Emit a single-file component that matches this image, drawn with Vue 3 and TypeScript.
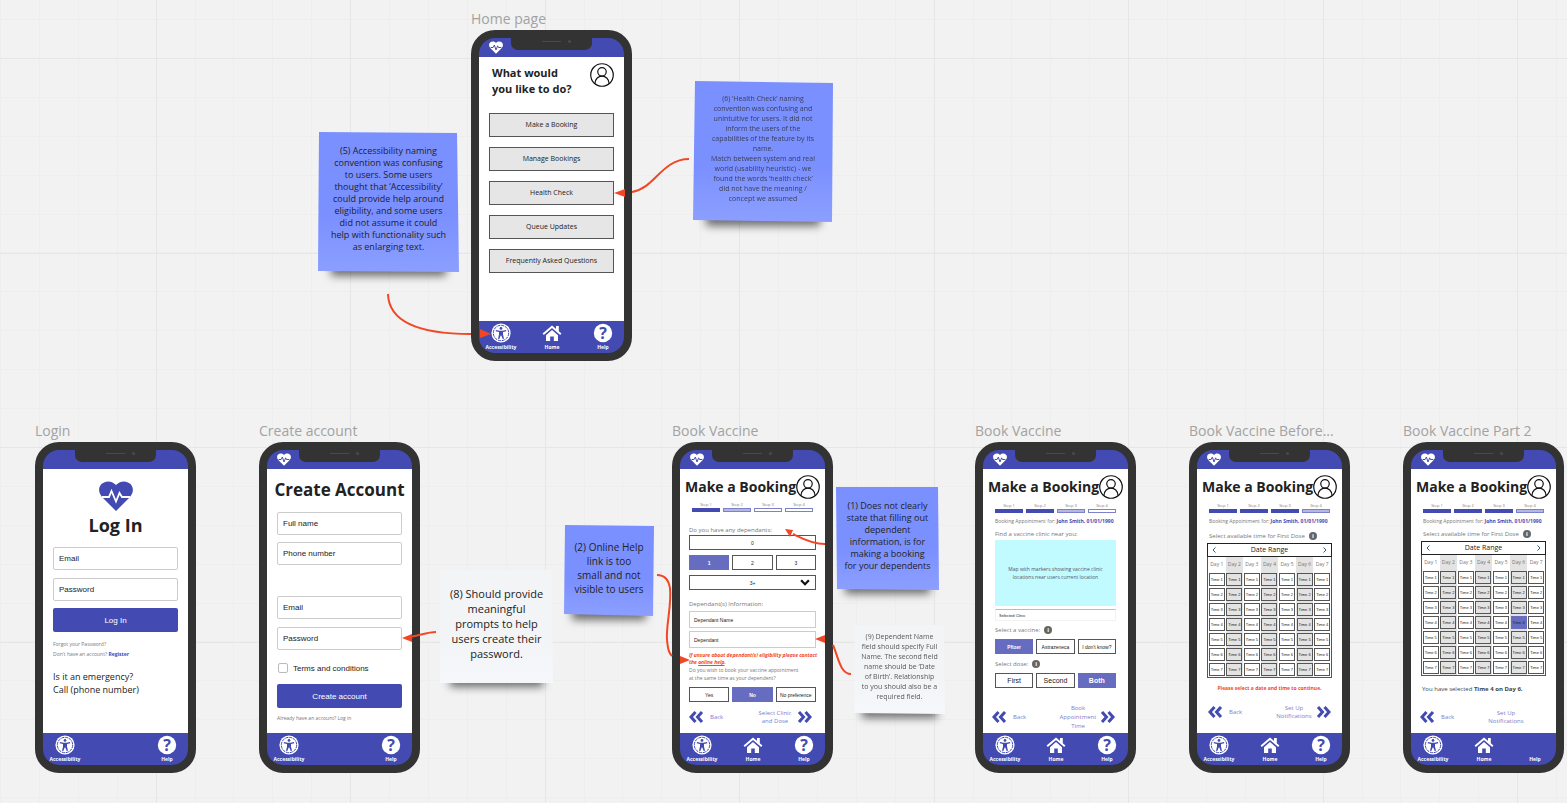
<script setup lang="ts">
type Kind = 'home' | 'login' | 'create' | 'dependants' | 'clinic' | 'time' | 'confirm'

interface Phone {
  id: string
  kind: Kind
  title: string
  x: number
  y: number
  steps?: number
}

interface Note {
  id: number
  tone: 'blue' | 'white'
  size: string
  x: number
  y: number
  w: number
  h: number
  shape: string
  text: string
}

const phones: Phone[] = [
  { id: 'home', kind: 'home', title: 'Home page', x: 471, y: 30 },
  { id: 'login', kind: 'login', title: 'Login', x: 35, y: 442 },
  { id: 'create', kind: 'create', title: 'Create account', x: 259, y: 442 },
  { id: 'book1', kind: 'dependants', title: 'Book Vaccine', x: 672, y: 442, steps: 1 },
  { id: 'book2', kind: 'clinic', title: 'Book Vaccine', x: 975, y: 442, steps: 2 },
  { id: 'book3', kind: 'time', title: 'Book Vaccine Before...', x: 1189, y: 442, steps: 3 },
  { id: 'book4', kind: 'confirm', title: 'Book Vaccine Part 2', x: 1403, y: 442, steps: 3 },
]

const notes: Note[] = [
  {
    id: 5, tone: 'blue', size: 'n9', x: 318, y: 132, w: 141, h: 140,
    shape: '1,0 139,1 141,140 0,139',
    text: '(5) Accessibility naming\nconvention was confusing\nto users. Some users\nthought that ‘Accessibility’\ncould provide help around\neligibility, and some users\ndid not assume it could\nhelp with functionality such\nas enlarging text.',
  },
  {
    id: 6, tone: 'blue', size: 'n7 faint', x: 693, y: 81, w: 140, h: 141,
    shape: '2,0 140,2 139,141 0,139',
    text: '(6) ‘Health Check’ naming\nconvention was confusing and\nunintuitive for users. It did not\ninform the users of the\ncapabilities of the feature by its\nname.\nMatch between system and real\nworld (usability heuristic) - we\nfound the words ‘health check’\ndid not have the meaning /\nconcept we assumed',
  },
  {
    id: 8, tone: 'white', size: 'n11', x: 440, y: 570, w: 113, h: 113,
    shape: '0,0 112,0 113,113 0,113',
    text: '(8) Should provide\nmeaningful\nprompts to help\nusers create their\npassword.',
  },
  {
    id: 2, tone: 'blue', size: 'n10', x: 564, y: 525, w: 90, h: 91,
    shape: '1,0 90,1 89,91 0,89',
    text: '(2) Online Help\nlink is too\nsmall and not\nvisible to users',
  },
  {
    id: 1, tone: 'blue', size: 'n9', x: 836, y: 487, w: 103, h: 103,
    shape: '0,0 102,0 103,103 1,102',
    text: '(1) Does not clearly\nstate that filling out\ndependent\ninformation, is for\nmaking a booking\nfor your dependents',
  },
  {
    id: 9, tone: 'white', size: 'n7 faint', x: 854, y: 625, w: 91, h: 89,
    shape: '1,0 90,0 91,89 0,88',
    text: '(9) Dependent Name\nfield should specify Full\nName. The second field\nname should be ‘Date\nof Birth’. Relationship\nto you should also be a\nrequired field.',
  },
]

const wires: string[] = [
  'M388 294 C389 325 425 334 471 334',
  'M689 159 C662 159 654 189 632 192',
  'M436 632 C428 632 421 635 410 637',
  'M657 575 C681 575 665 620 667 640 C668 650 669 653 672 656',
  'M825 544 C812 544 801 538 793 534',
  'M833 645 C838 656 840 674 851 674',
]

const heads: string[] = [
  '491,334 480,329 480,338',
  '614,193 625,189 625,197',
  '402,638 412,634 412,642',
  '690,660 680,656 680,664',
  '785,529 793,530 790,537',
  '815,639 825,635 825,643',
]

const homeActions = ['Make a Booking', 'Manage Bookings', 'Health Check', 'Queue Updates', 'Frequently Asked Questions']
const days = [1, 2, 3, 4, 5, 6, 7]
const major = Array.from({ length: 20 }, (_, i) => Math.round(-39 + i * 194.5))
const minor = Array.from({ length: 100 }, (_, i) => Math.round(i * 38.9))

const isBooking = (p: Phone) => p.steps !== undefined
const stepClass = (p: Phone, n: number) => {
  const done = p.steps ?? 0
  return n <= done ? 'done' : n === done + 1 ? 'next' : ''
}
const place = (x: number, y: number) => ({ left: `${x}px`, top: `${y}px` })
const box = (n: Note) => ({ ...place(n.x, n.y), width: `${n.w}px`, height: `${n.h}px` })
</script>

<template>
  <main class="board">
    <svg class="layer" aria-hidden="true">
      <g class="minor">
        <line v-for="v in minor" :key="'a' + v" :x1="v" :x2="v" y1="0" y2="100%" />
        <line v-for="v in minor" :key="'b' + v" :y1="v + 19" :y2="v + 19" x1="0" x2="100%" />
      </g>
      <g class="major">
        <line v-for="v in major" :key="'c' + v" :x1="v" :x2="v" y1="0" y2="100%" />
        <line v-for="v in major" :key="'d' + v" :y1="v + 97" :y2="v + 97" x1="0" x2="100%" />
      </g>
    </svg>

    <section v-for="p in phones" :key="p.id" class="device" :class="p.kind" :style="place(p.x, p.y)">
      <h2 class="caption">{{ p.title }}</h2>
      <div class="phone">
        <header class="status">
          <svg v-if="p.kind !== 'login'" class="logo" viewBox="0 0 34 30" aria-hidden="true">
            <path fill="#fff" d="M17 30 L3 16 C-6 5 8 -5 17 4 C26 -5 40 5 31 16 Z" />
            <path fill="none" stroke="#434bb3" stroke-width="2.4" d="M4 15 H10 L13 9 L17 21 L21 11 L23 15 H30" />
          </svg>
          <span class="notch"><i class="speaker"></i><i class="camera"></i></span>
        </header>

        <div class="screen">
          <template v-if="p.kind === 'home'">
            <div class="hello">
              <h3>What would<br />you like to do?</h3>
              <svg class="avatar" viewBox="0 0 26 26" role="img" aria-label="Profile">
                <g fill="none" stroke="#111" stroke-width="1.3">
                  <circle cx="13" cy="13" r="12.2" />
                  <circle cx="13" cy="9.6" r="4.6" />
                  <path d="M5.4 22.3 C5.6 11.6 20.4 11.6 20.6 22.3" />
                </g>
              </svg>
            </div>
            <div class="menu">
              <button v-for="a in homeActions" :key="a" type="button">{{ a }}</button>
            </div>
          </template>

          <form v-else-if="p.kind === 'login'" class="form" @submit.prevent>
            <svg class="heart" viewBox="0 0 34 30" aria-hidden="true">
              <path fill="#434bb3" d="M17 30 L3 16 C-6 5 8 -5 17 4 C26 -5 40 5 31 16 Z" />
              <path fill="none" stroke="#fff" stroke-width="1.8" d="M3 16 H10 L12.500 10 L17 20.500 L20.500 12 L23 16 H31" />
            </svg>
            <h3 class="login-title">Log In</h3>
            <input class="field" type="email" placeholder="Email" aria-label="Email" />
            <input class="field pw" type="password" placeholder="Password" aria-label="Password" />
            <button class="primary" type="submit">Log In</button>
            <p class="hint">Forgot your Password?<br />Don't have an account? <a href="#register">Register</a></p>
            <p class="emergency">Is it an emergency?<br />Call (phone number)</p>
          </form>

          <form v-else-if="p.kind === 'create'" class="form" @submit.prevent>
            <h3 class="create-title">Create Account</h3>
            <input class="field" type="text" placeholder="Full name" aria-label="Full name" />
            <input class="field" type="tel" placeholder="Phone number" aria-label="Phone number" />
            <input class="field apart" type="email" placeholder="Email" aria-label="Email" />
            <input class="field pw" type="password" placeholder="Password" aria-label="Password" />
            <label class="terms"><input type="checkbox" /> Terms and conditions</label>
            <button class="primary" type="submit">Create account</button>
            <p class="hint">Already have an account? Log in</p>
          </form>

          <template v-if="isBooking(p)">
            <div class="title-row">
              <h3>Make a Booking</h3>
              <svg class="avatar" viewBox="0 0 26 26" role="img" aria-label="Profile">
                <g fill="none" stroke="#111" stroke-width="1.3">
                  <circle cx="13" cy="13" r="12.2" />
                  <circle cx="13" cy="9.6" r="4.6" />
                  <path d="M5.4 22.3 C5.6 11.6 20.4 11.6 20.6 22.3" />
                </g>
              </svg>
            </div>
            <ol class="steps">
              <li v-for="n in 4" :key="n" :class="stepClass(p, n)">Step {{ n }}</li>
            </ol>
            <p v-if="p.kind !== 'dependants'" class="who">Booking Appointment for: <b>John Smith, 01/01/1990</b></p>
          </template>

          <form v-if="p.kind === 'dependants'" class="dependants-form" @submit.prevent>
            <p class="label">Do you have any dependants:</p>
            <button class="choice" type="button">0</button>
            <div class="row">
              <button class="choice on" type="button">1</button>
              <button class="choice" type="button">2</button>
              <button class="choice" type="button">3</button>
            </div>
            <div class="picker">
              <select class="choice" aria-label="More dependants"><option>3+</option></select>
              <svg viewBox="0 0 9 6" aria-hidden="true"><path d="M1 1 L4.500 4.500 L8 1" fill="none" stroke="#111" stroke-width="2" /></svg>
            </div>
            <p class="label info-label">Dependant(s) Information:</p>
            <input class="line" type="text" placeholder="Dependant Name" aria-label="Dependant Name" />
            <input class="line" type="text" placeholder="Dependant" aria-label="Dependant" />
            <p class="warn">If unsure about dependant(s) eligibility please contact<br />the <a href="#help">online help</a>.</p>
            <p class="ask">Do you wish to book your vaccine appointment<br />at the same time as your dependent?</p>
            <div class="row">
              <button class="choice" type="button">Yes</button>
              <button class="choice on" type="button">No</button>
              <button class="choice" type="button">No preference</button>
            </div>
          </form>

          <form v-else-if="p.kind === 'clinic'" class="clinic-form" @submit.prevent>
            <p class="label">Find a vaccine clinic near you:</p>
            <div class="map">Map with markers showing vaccine clinic<br />locations near users current location</div>
            <input class="selected" type="text" placeholder="Selected Clinic" aria-label="Selected Clinic" />
            <p class="label">Select a vaccine: <span class="info">i</span></p>
            <div class="row">
              <button class="choice on" type="button">Pfizer</button>
              <button class="choice" type="button">Astrazeneca</button>
              <button class="choice" type="button">I don't know?</button>
            </div>
            <p class="label">Select dose: <span class="info">i</span></p>
            <div class="row dose">
              <button class="choice" type="button">First</button>
              <button class="choice" type="button">Second</button>
              <button class="choice on" type="button">Both</button>
            </div>
          </form>

          <div v-else-if="p.kind === 'time' || p.kind === 'confirm'" class="schedule">
            <p class="label">Select available time for First Dose <span class="info">i</span></p>
            <div class="calendar">
              <div class="range">
                <button type="button" aria-label="Previous dates">
                  <svg viewBox="0 0 4 6"><path d="M3.500 0.500 L1 3 L3.500 5.500" /></svg>
                </button>
                <span>Date Range</span>
                <button type="button" aria-label="Next dates">
                  <svg viewBox="0 0 4 6"><path d="M0.500 0.500 L3 3 L0.500 5.500" /></svg>
                </button>
              </div>
              <table>
                <thead>
                  <tr><th v-for="d in days" :key="d" scope="col">Day {{ d }}</th></tr>
                </thead>
                <tbody>
                  <tr v-for="t in days" :key="t">
                    <td v-for="d in days" :key="d">
                      <button type="button" :class="{ on: p.kind === 'confirm' && t === 4 && d === 6 }">Time {{ t }}</button>
                    </td>
                  </tr>
                </tbody>
              </table>
            </div>
            <p v-if="p.kind === 'time'" class="must">Please select a date and time to continue.</p>
            <p v-else class="chosen">You have selected <b>Time 4 on Day 6.</b></p>
          </div>

          <nav v-if="isBooking(p)" class="pager" aria-label="Booking steps">
            <a class="back" href="#back">
              <svg class="chev" viewBox="0 0 15 12" aria-hidden="true"><path d="M6.500 1 L2 6 L6.500 11 M13 1 L8.500 6 L13 11" /></svg>
              <span>Back</span>
            </a>
            <a class="forward" href="#next">
              <span v-if="p.kind === 'dependants'">Select Clinic<br />and Dose</span>
              <span v-else-if="p.kind === 'clinic'">Book<br />Appointment<br />Time</span>
              <span v-else>Set Up<br />Notifications</span>
              <svg class="chev" :class="{ blank: p.kind === 'confirm' }" viewBox="0 0 15 12" aria-hidden="true"><path d="M2 1 L6.500 6 L2 11 M8.500 1 L13 6 L8.500 11" /></svg>
            </a>
          </nav>
        </div>

        <footer class="tabs">
          <a href="#accessibility">
            <svg viewBox="0 0 20 20" aria-hidden="true">
              <circle cx="10" cy="10" r="9.6" fill="#fff" />
              <circle cx="10" cy="10" r="7.7" fill="none" stroke="#434bb3" stroke-width="1" stroke-dasharray="3.200 0.830" />
              <circle cx="10" cy="5.400" r="1.400" fill="#434bb3" />
              <path fill="#434bb3" d="M5 7 L8.500 7.700 H11.500 L15 7 L15.300 8.200 L12 9.100 V11.500 L13 15.700 L11.700 16 L10.300 12.600 H9.700 L8.300 16 L7 15.700 L8 11.500 V9.100 L4.700 8.200 Z" />
            </svg>
            Accessibility
          </a>
          <a v-if="p.kind !== 'login' && p.kind !== 'create'" href="#home">
            <svg viewBox="0 0 20 20" aria-hidden="true">
              <path fill="#fff" d="M10 7 L16 12.200 V18 H11.800 V13.500 H8.200 V18 H4 V12.200 Z" />
              <path fill="#fff" d="M14 3 H16.800 V9 L14 6.500 Z" />
              <path fill="none" stroke="#fff" stroke-width="1.900" d="M1.200 11.300 L10 3.700 L18.800 11.300" />
            </svg>
            Home
          </a>
          <a href="#help">
            <svg viewBox="0 0 20 20" aria-hidden="true">
              <g v-if="p.kind !== 'confirm'">
                <circle cx="10" cy="10" r="9.200" fill="#fff" />
                <text x="10" y="15.500" text-anchor="middle">?</text>
              </g>
            </svg>
            Help
          </a>
        </footer>
      </div>
    </section>

    <svg class="layer wires" aria-hidden="true">
      <path v-for="w in wires" :key="w" :d="w" />
      <polygon v-for="h in heads" :key="h" :points="h" />
    </svg>

    <article v-for="n in notes" :key="n.id" class="note" :class="[n.tone, n.size]" :style="box(n)">
      <svg :viewBox="`0 0 ${n.w} ${n.h}`" aria-hidden="true">
        <defs>
          <linearGradient :id="`paper${n.id}`" x1="0" y1="0" x2="0" y2="1">
            <stop offset="0.6" :stop-color="n.tone === 'blue' ? '#7b90ff' : '#f3f4f6'" />
            <stop offset="1" :stop-color="n.tone === 'blue' ? '#8c9fff' : '#f6f7fb'" />
          </linearGradient>
        </defs>
        <polygon :points="n.shape" :fill="`url(#paper${n.id})`" />
      </svg>
      <p>{{ n.text }}</p>
    </article>
  </main>
</template>

<style>
body {
  margin: 0;
}
</style>

<style scoped>
.board {
  position: relative;
  min-height: 100vh;
  overflow: hidden;
  background: #f2f2f2;
  font-family: "Open Sans", "Noto Sans", sans-serif;
  color: #222;
}
.board *,
.board *::before,
.board *::after {
  box-sizing: border-box;
}
.layer {
  position: absolute;
  inset: 0;
  width: 100%;
  height: 100%;
  shape-rendering: crispEdges;
}
.minor line {
  stroke: #eeeeee;
}
.major line {
  stroke: #e6e6e6;
}
.wires {
  pointer-events: none;
  shape-rendering: auto;
}
.wires path {
  fill: none;
  stroke: #f24726;
  stroke-width: 2;
}
.wires polygon {
  fill: #f24726;
}
h2, h3, p, ol {
  margin: 0;
  padding: 0;
}
a {
  color: inherit;
  text-decoration: none;
}
button, input, select {
  font-family: inherit;
  margin: 0;
  padding: 0;
  border-radius: 0;
  appearance: none;
  color: inherit;
}
input::placeholder {
  color: #222;
  opacity: 1;
}

/* device frame */
.device {
  position: absolute;
  width: 161px;
}
.caption {
  position: absolute;
  bottom: 100%;
  left: 0;
  font-size: 14px;
  line-height: 23px;
  font-weight: 400;
  white-space: nowrap;
  color: #a2a2a2;
}
.phone {
  border: 8px solid #333;
  border-radius: 24px;
  background: #434bb3;
  overflow: hidden;
}
.status {
  position: relative;
  height: 19px;
  padding: 3px 10px 0;
}
.logo {
  display: block;
  width: 14px;
  height: 13px;
}
.notch {
  position: absolute;
  top: -1px;
  left: 32px;
  width: 81px;
  height: 13px;
  border-radius: 0 0 7px 7px;
  background: #333;
}
.speaker {
  position: absolute;
  left: 31px;
  top: 4px;
  width: 19px;
  height: 1px;
  background: #4a4a4a;
}
.camera {
  position: absolute;
  left: 57px;
  top: 3px;
  width: 3px;
  height: 3px;
  border-radius: 50%;
  background: #4a4a4a;
}
.screen {
  display: flex;
  flex-direction: column;
  min-height: 264px;
  background: #fff;
}
.tabs {
  display: flex;
  justify-content: space-between;
  height: 32px;
  padding: 2px 3px 0 4px;
  color: #fff;
  font-size: 5px;
  line-height: 8px;
  font-weight: 700;
}
.tabs a {
  display: flex;
  flex-direction: column;
  align-items: center;
  width: 36px;
}
.tabs svg {
  width: 20px;
  height: 20px;
}
.tabs text {
  font: 700 16px "Open Sans", sans-serif;
  fill: #434bb3;
}
.avatar {
  width: 24px;
  height: 24px;
  flex: none;
}

/* home */
.hello {
  display: flex;
  justify-content: space-between;
  align-items: flex-start;
  padding: 6px 10px 0 13px;
}
.hello h3 {
  padding-top: 2px;
  font-size: 11px;
  line-height: 16px;
}
.menu {
  display: flex;
  flex-direction: column;
  gap: 10px;
  padding: 16px 10px 0;
}
.menu button {
  height: 24px;
  border: 1px solid #555;
  background: #e6e6e6;
  font-size: 7px;
  line-height: 20px;
}

/* login and sign-up */
.form {
  display: flex;
  flex-direction: column;
  padding: 0 10px;
}
.heart {
  width: 34px;
  height: 30px;
  margin: 12px auto 0;
}
.login-title {
  margin: 2px 0 3px;
  font-size: 18px;
  line-height: 24px;
  text-align: center;
}
.create-title {
  margin: 9px -10px 3px;
  font-size: 17px;
  line-height: 24px;
  text-align: center;
  white-space: nowrap;
}
.field {
  width: 100%;
  height: 23px;
  margin-top: 7px;
  padding: 0 5px;
  border: 1px solid #ccc;
  border-radius: 2px;
  background: #fff;
  font-family: "Liberation Sans", Arial, sans-serif;
  font-size: 8px;
}
.field.pw {
  margin-top: 8px;
}
.field.apart {
  margin-top: 31px;
}
.primary {
  height: 24px;
  margin-top: 7px;
  border: 0;
  border-radius: 2px;
  background: #434bb3;
  color: #fff;
  font-family: "Liberation Sans", Arial, sans-serif;
  font-size: 8px;
}
.hint {
  margin-top: 7px;
  font-size: 5px;
  line-height: 10px;
  color: #777;
}
.create .hint {
  margin-top: 5px;
}
.hint a {
  font-weight: 700;
  color: #434bb3;
}
.emergency {
  margin-top: 11px;
  font-size: 9px;
  line-height: 13px;
}
.terms {
  display: flex;
  align-items: center;
  gap: 5px;
  height: 12px;
  margin: 12px 0 3px 1px;
  font-family: "Liberation Sans", Arial, sans-serif;
  font-size: 8px;
}
.terms input {
  width: 10px;
  height: 10px;
  border: 1px solid #bbb;
  border-radius: 2px;
}

/* booking screens */
.title-row {
  display: flex;
  align-items: center;
  justify-content: space-between;
  height: 26px;
  margin: 5px 5px 0;
}
.title-row h3 {
  width: 0;
  flex: 1;
  font-size: 14px;
  line-height: 20px;
  white-space: nowrap;
}
.steps {
  display: grid;
  grid-template-columns: repeat(4, 1fr);
  gap: 3px;
  margin: 3px 12px 0;
  list-style: none;
  font-size: 4px;
  line-height: 6px;
  text-align: center;
  color: #777;
}
.dependants .steps {
  margin-top: 2px;
}
.steps li::after {
  content: "";
  display: block;
  height: 4px;
  border: 1px solid #7b81cb;
}
.steps .done::after {
  background: #434bb3;
  border-color: #434bb3;
}
.steps .next::after {
  background: #b4b7e1;
}
.who {
  margin: 5px 12px 0;
  font-size: 5px;
  line-height: 6px;
  white-space: nowrap;
  color: #777;
}
.who b {
  color: #434bb3;
}
.label {
  display: flex;
  align-items: center;
  gap: 4px;
  font-size: 6px;
  line-height: 8px;
  white-space: nowrap;
  color: #777;
}
.info {
  width: 8px;
  height: 8px;
  border-radius: 50%;
  background: #666;
  color: #fff;
  font-size: 6px;
  font-weight: 700;
  text-align: center;
}
.choice {
  display: block;
  width: 100%;
  height: 15px;
  border: 1px solid #555;
  background: #fff;
  font-family: "Liberation Sans", Arial, sans-serif;
  font-size: 5px;
  text-align: center;
  text-align-last: center;
  white-space: nowrap;
}
.choice.on {
  border-color: #666dc1;
  background: #666dc1;
  color: #fff;
  font-weight: 700;
}
.row {
  display: grid;
  grid-template-columns: repeat(3, 1fr);
  gap: 3px;
}
.dependants-form {
  display: flex;
  flex-direction: column;
  padding: 14px 9px 0;
}
.dependants-form .label {
  margin-bottom: 1px;
}
.dependants-form .row,
.picker {
  margin-top: 5px;
}
.picker {
  position: relative;
}
.picker svg {
  position: absolute;
  right: 6px;
  top: 4px;
  width: 10px;
  height: 7px;
}
.dependants-form .info-label {
  margin: 10px 0 0;
}
.line {
  height: 17px;
  margin-top: 3px;
  padding: 0 4px;
  border: 1px solid #ccc;
  font-family: "Liberation Sans", Arial, sans-serif;
  font-size: 5px;
}
.warn {
  margin-top: 4px;
  font-size: 5px;
  line-height: 7px;
  font-weight: 700;
  font-style: italic;
  white-space: nowrap;
  color: #f24726;
}
.warn a {
  text-decoration: underline;
}
.ask {
  font-size: 5px;
  line-height: 8px;
  white-space: nowrap;
  color: #777;
}
.clinic-form {
  display: flex;
  flex-direction: column;
  padding: 6px 12px 0;
}
.map {
  display: flex;
  align-items: center;
  justify-content: center;
  height: 66px;
  margin-top: 2px;
  background: #c2fbff;
  font-size: 5px;
  line-height: 8px;
  text-align: center;
  color: #556;
}
.selected {
  height: 12px;
  margin: 3px 0 5px;
  padding: 0 3px;
  border: 1px solid #f2f2f2;
  border-top-color: #bbb;
  font-family: "Liberation Sans", Arial, sans-serif;
  font-size: 4px;
}
.clinic-form .row {
  margin: 5px 0 6px;
}
.dose .choice {
  font-size: 7px;
}
.schedule .label {
  padding: 8px 12px 3px;
}
.confirm .schedule .label {
  padding-top: 6px;
}
.calendar {
  margin: 0 10px;
  border: 1px solid #555;
}
.range {
  display: flex;
  align-items: center;
  justify-content: space-between;
  height: 14px;
  margin: -1px -1px 0;
  padding: 0 4px;
  border: 1px solid #222;
  font-size: 7px;
  line-height: 12px;
}
.range button {
  display: flex;
  border: 0;
  background: none;
}
.range svg {
  width: 4px;
  height: 6px;
  fill: none;
  stroke: #2a5f80;
}
table {
  width: 100%;
  table-layout: fixed;
  border-collapse: collapse;
}
th {
  height: 15px;
  padding: 0;
  font-size: 5px;
  line-height: 15px;
  font-weight: 400;
  white-space: nowrap;
  color: #777;
}
td {
  height: 15px;
  padding: 0;
}
th:nth-child(even),
td:nth-child(even) {
  background: #e3e3e3;
}
td button {
  display: block;
  width: 16px;
  height: 13px;
  margin: 0 auto;
  border: 1px solid #555;
  background: #fff;
  font-family: "Liberation Sans", Arial, sans-serif;
  font-size: 4px;
  white-space: nowrap;
}
td:nth-child(even) button {
  background: #e3e3e3;
}
td:nth-child(even) button.on {
  border-color: #666dc1;
  background: #666dc1;
}
.must {
  margin-top: 6px;
  font-size: 5px;
  line-height: 8px;
  font-weight: 700;
  text-align: center;
  color: #f24726;
}
.chosen {
  margin: 9px 11px 0;
  font-size: 6px;
  line-height: 8px;
  white-space: nowrap;
  color: #444;
}
.pager {
  display: flex;
  justify-content: space-between;
  align-items: center;
  height: 28px;
  margin: auto 13px 2px 9px;
  font-size: 6px;
  line-height: 8px;
  color: #7b81cb;
}
.time .pager {
  margin: auto 11px 7px;
}
.clinic .pager {
  line-height: 9px;
}
.back,
.forward {
  display: flex;
  align-items: center;
}
.back {
  gap: 6px;
}
.forward span {
  width: 44px;
  text-align: center;
}
.chev {
  width: 15px;
  height: 12px;
  fill: none;
  stroke: #434bb3;
  stroke-width: 3;
}
.chev.blank {
  visibility: hidden;
}

/* sticky notes */
.note {
  position: absolute;
  display: flex;
  align-items: center;
  justify-content: center;
  padding-bottom: 6px;
  text-align: center;
  white-space: pre;
}
.note::before {
  content: "";
  position: absolute;
  left: 9%;
  right: 9%;
  bottom: -4px;
  height: 14px;
  background: rgba(0, 0, 0, 0.55);
  filter: blur(4px);
}
.note svg {
  position: absolute;
  inset: 0;
  width: 100%;
  height: 100%;
}
.note p {
  position: relative;
}
.n7 {
  font-size: 7px;
  line-height: 10px;
}
.n9 {
  font-size: 9px;
  line-height: 12px;
}
.n10 {
  font-size: 10px;
  line-height: 14px;
}
.n11 {
  font-size: 11px;
  line-height: 15px;
}
.faint p {
  opacity: 0.75;
}
</style>
